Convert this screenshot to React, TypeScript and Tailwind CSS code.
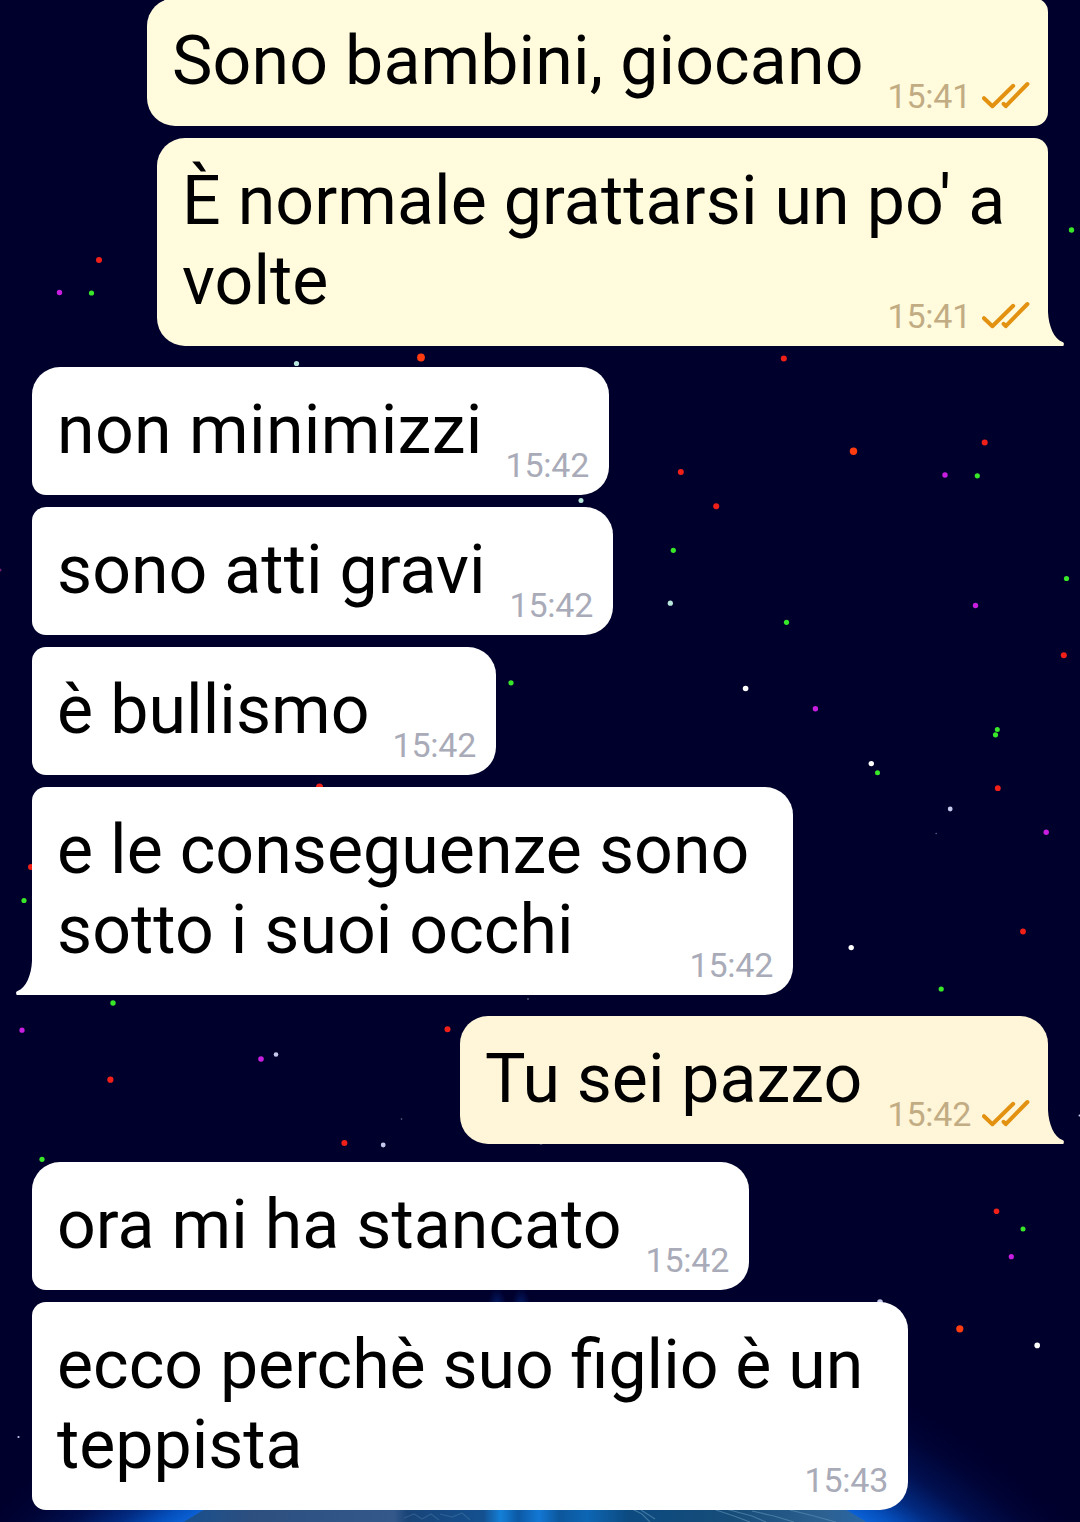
import clsx from "clsx";
import type React from "react";

interface Message {
  lines: string[];
  time: string;
  className: string;
  out?: boolean;
  tail?: boolean;
}

const messages: Message[] = [
  {
    lines: ["Sono bambini, giocano"],
    time: "15:41",
    out: true,
    className: "w-[901px] bg-[#fffbdc] rounded-l-[28px] rounded-r-[14px] tracking-[0.14px]",
  },
  {
    lines: ["È normale grattarsi un po' a", "volte"],
    time: "15:41",
    out: true,
    tail: true,
    className:
      "mt-3 w-[891px] bg-[#fffbdc] text-[#fffbdc] rounded-l-[28px] rounded-tr-[14px] tracking-[0.08px]",
  },
  {
    lines: ["non minimizzi"],
    time: "15:42",
    className: "mt-[21px] w-[577px] bg-white rounded-[28px] rounded-bl-[14px] tracking-[0.34px]",
  },
  {
    lines: ["sono atti gravi"],
    time: "15:42",
    className: "mt-3 w-[581px] bg-white rounded-l-[14px] rounded-r-[28px] tracking-[0.05px]",
  },
  {
    lines: ["è bullismo"],
    time: "15:42",
    className: "mt-3 w-[464px] bg-white rounded-l-[14px] rounded-r-[28px] tracking-[0.1px]",
  },
  {
    lines: ["e le conseguenze sono", "sotto i suoi occhi"],
    time: "15:42",
    tail: true,
    className:
      "mt-3 w-[761px] bg-white text-white rounded-tl-[14px] rounded-r-[28px] tracking-[0.06px]",
  },
  {
    lines: ["Tu sei pazzo"],
    time: "15:42",
    out: true,
    tail: true,
    className: "mt-[21px] w-[588px] bg-[#fff5d8] text-[#fff5d8] rounded-[28px] rounded-br-none",
  },
  {
    lines: ["ora mi ha stancato"],
    time: "15:42",
    className: "mt-[18px] w-[717px] bg-white rounded-[28px] rounded-bl-[14px] tracking-[0.06px]",
  },
  {
    lines: ["ecco perchè suo figlio è un", "teppista"],
    time: "15:43",
    className: "mt-3 w-[876px] bg-white rounded-l-[14px] rounded-r-[28px]",
  },
];

const RED = "#f02018";
const ORANGE = "#ff3c10";
const GREEN = "#38e828";
const PURPLE = "#c81ee0";
const MINT = "#b8e8dc";
const WHITE = "#ffffff";
const DIM = "#c4c8ea";

// x, y, radius, color
const stars: [number, number, number, string][] = [
  [99, 260, 3, RED],
  [59.5, 292.5, 2.7, PURPLE],
  [91.5, 293, 2.6, GREEN],
  [1071.5, 230, 2.7, GREEN],
  [296.5, 363.5, 2.6, MINT],
  [421, 357.5, 3.9, ORANGE],
  [783.8, 358.5, 3, RED],
  [853.5, 451.3, 3.7, ORANGE],
  [984.7, 442.5, 3, RED],
  [680.8, 472, 3, RED],
  [945, 475, 2.7, PURPLE],
  [977.3, 475.8, 2.6, GREEN],
  [716.2, 506.2, 3, RED],
  [581, 500.5, 2.5, MINT],
  [673.3, 550.3, 2.6, GREEN],
  [1066.5, 578.5, 2.6, GREEN],
  [0, 570, 1.5, "#70206e"],
  [670.3, 603.2, 2.6, MINT],
  [975.5, 605.5, 2.7, PURPLE],
  [786.5, 622.3, 2.6, GREEN],
  [1063.8, 655.2, 3, RED],
  [511, 682.8, 2.6, GREEN],
  [745.6, 688.5, 2.8, WHITE],
  [815.4, 708.7, 2.7, PURPLE],
  [997.3, 729.5, 2.5, GREEN],
  [995.5, 734.8, 2.6, GREEN],
  [871.3, 763.6, 2.7, WHITE],
  [877.5, 772.7, 2.5, GREEN],
  [997.8, 788.2, 2.9, RED],
  [319.5, 787, 3.5, RED],
  [950.2, 809, 2.4, DIM],
  [936.2, 833.5, 0.8, "#60608a"],
  [1046.2, 832.2, 2.7, PURPLE],
  [31, 867, 3, RED],
  [24, 900.5, 2.6, GREEN],
  [1023, 931.5, 2.9, RED],
  [851.2, 947.6, 2.7, WHITE],
  [941.2, 989, 2.6, GREEN],
  [113, 1003, 2.7, GREEN],
  [528, 999, 0.9, "#50607a"],
  [22, 1030.2, 2.6, PURPLE],
  [447.5, 1029.3, 3, RED],
  [261, 1059, 2.8, PURPLE],
  [276, 1054.5, 2.3, DIM],
  [110.4, 1079.7, 3.1, RED],
  [401.5, 1119, 0.8, "#70708e"],
  [1079.5, 1115.5, 1, DIM],
  [344.4, 1143, 3, RED],
  [383.2, 1145, 2.4, DIM],
  [541, 1143, 1.8, "#5c7a86"],
  [42, 1159.3, 2.6, GREEN],
  [996.5, 1211.3, 2.8, RED],
  [1023, 1229, 2.5, GREEN],
  [1011.3, 1256.7, 2.6, PURPLE],
  [880, 1302, 2.8, DIM],
  [959.8, 1328.8, 3.6, ORANGE],
  [1037.2, 1345.4, 2.8, WHITE],
  [18.5, 1437, 1.1, DIM],
];

function Wallpaper(): React.ReactNode {
  return (
    <svg
      viewBox="0 0 1080 1522"
      className="absolute inset-0 h-[1522px] w-[1080px]"
      aria-hidden="true"
    >
      <defs>
        <radialGradient id="glow" gradientUnits="userSpaceOnUse" cx="525" cy="2075" r="780">
          <stop offset="0.833" stopColor="#0b60d4" />
          <stop offset="0.85" stopColor="#0550be" />
          <stop offset="0.88" stopColor="#022a80" />
          <stop offset="0.915" stopColor="#011050" />
          <stop offset="0.955" stopColor="#000436" />
          <stop offset="1" stopColor="#00002d" stopOpacity="0" />
        </radialGradient>
        <linearGradient id="planet" gradientUnits="userSpaceOnUse" x1="180" y1="0" x2="870" y2="0">
          <stop offset="0" stopColor="#17508f" />
          <stop offset="0.1" stopColor="#2c4f80" />
          <stop offset="0.31" stopColor="#34588a" />
          <stop offset="0.33" stopColor="#184478" />
          <stop offset="0.44" stopColor="#145090" />
          <stop offset="0.465" stopColor="#1480d8" />
          <stop offset="0.49" stopColor="#0c58a4" />
          <stop offset="0.52" stopColor="#1278d4" />
          <stop offset="0.55" stopColor="#0c569c" />
          <stop offset="0.59" stopColor="#0d66b4" />
          <stop offset="0.65" stopColor="#0c4a80" />
          <stop offset="0.8" stopColor="#164c78" />
          <stop offset="0.93" stopColor="#2c6090" />
          <stop offset="1" stopColor="#2a68a8" />
        </linearGradient>
        <radialGradient id="flare">
          <stop offset="0" stopColor="#031a62" />
          <stop offset="1" stopColor="#031a62" stopOpacity="0" />
        </radialGradient>
      </defs>
      <circle cx="525" cy="2075" r="780" fill="url(#glow)" />
      <ellipse cx="497" cy="1304" rx="9" ry="16" fill="url(#flare)" />
      <ellipse cx="521" cy="1304" rx="9" ry="16" fill="url(#flare)" />
      <circle cx="525" cy="2075" r="650" fill="url(#planet)" />
      {/* cloud streaks */}
      <g stroke="#5f93b8" strokeOpacity="0.6" strokeWidth="1.2" fill="none">
        <path d="M632 1509l10 5 8 8M641 1510l14 9M716 1510l18 6 16 6M726 1509l26 7 14 6M752 1511l22 5 20 6M790 1510l24 6 22 6" />
        <path d="M404 1518l10-4 8 5 9-5 8 6M440 1514l12 3 10-4 8 7" strokeOpacity="0.3" />
      </g>
      {stars.map(([x, y, r, color]) => (
        <circle key={`${x}-${y}`} cx={x} cy={y} r={r} fill={color} />
      ))}
    </svg>
  );
}

function Checks(): React.ReactNode {
  return (
    <svg
      viewBox="0 0 48 28"
      className="mb-[7px] ml-[11px] h-7 w-12"
      fill="none"
      stroke="#e29210"
      strokeWidth="4"
      strokeLinecap="round"
      strokeLinejoin="round"
    >
      <path d="M2 17.2 10.4 25.2 31.2 4.8" />
      <path d="M21.6 22.8 23.8 25.2 45.4 3" />
    </svg>
  );
}

function Tail({ out }: { out?: boolean }): React.ReactNode {
  return (
    <svg
      viewBox="0 0 17 34"
      className={clsx(
        "absolute bottom-0 h-[34px] w-[17px]",
        out ? "left-full" : "right-full -scale-x-100",
      )}
      fill="currentColor"
    >
      <path d="M0 0C0.6 14 6 27 14.5 30Q16.6 30.8 15.6 33.2L15.4 34H0Z" />
    </svg>
  );
}

function Bubble({ lines, time, out, tail, className }: Message): React.ReactNode {
  const first = lines.slice(0, -1);
  const last = lines[lines.length - 1];

  return (
    <div
      className={clsx(
        "relative flex flex-col pt-[23px] pl-[25px] text-[68px] leading-[80px] whitespace-nowrap",
        out ? "self-end pr-[18px]" : "self-start pr-5",
        className,
      )}
    >
      {first.map((line) => (
        <p key={line} className="text-black">
          {line}
        </p>
      ))}
      <div className="flex items-end justify-between">
        <p className="pb-[25px] text-black">{last}</p>
        <div
          className={clsx(
            "flex items-end pb-[10px] text-[34px] leading-[40px] tracking-[-0.25px]",
            out ? "text-[#c2ac84]" : "text-[#a9abb8]",
          )}
        >
          <span>{time}</span>
          {out && <Checks />}
        </div>
      </div>
      {tail && <Tail out={out} />}
    </div>
  );
}

export default function App(): React.ReactNode {
  return (
    <div className="relative h-[1522px] w-[1080px] overflow-hidden bg-[#00002d] font-[Roboto,sans-serif]">
      <Wallpaper />
      <main className="relative -mt-0.5 flex flex-col px-8">
        {messages.map((message) => (
          <Bubble key={message.lines[0]} {...message} />
        ))}
      </main>
    </div>
  );
}
